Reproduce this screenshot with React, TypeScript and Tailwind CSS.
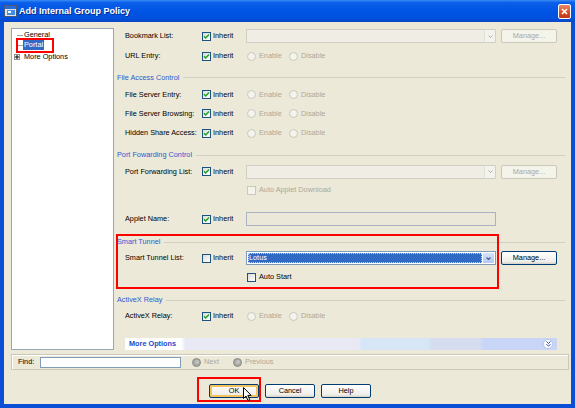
import React from 'react';

const Check = ({ checked = false }: { checked?: boolean }) => (
  <span className="w-[9px] h-[9px] shrink-0 flex items-center justify-center border border-[#1c5180] bg-[linear-gradient(135deg,#dcdcd6,#ffffff)]">
    {checked && (
      <svg width="7" height="7" viewBox="0 0 7 7">
        <path d="M1 3.2 L2.7 5 L6 1.5" fill="none" stroke="#21a121" strokeWidth="1.5" />
      </svg>
    )}
  </span>
);

const Radio = ({ label }: { label: string }) => (
  <span className="flex items-center gap-[3px] text-[#aca899]">
    <span className="w-[9px] h-[9px] rounded-full border border-[#cac8bb] bg-[#f4f3ee]" />
    {label}
  </span>
);

const Radios = () => (
  <div className="flex items-center ml-[1px]">
    <span className="w-[42px]">
      <Radio label="Enable" />
    </span>
    <Radio label="Disable" />
  </div>
);

const Combo = () => (
  <div className="w-[250px] h-[14px] border border-[#d2d0c5] bg-[#efede4] flex justify-end">
    <span className="w-[11px] h-full border-l border-[#e0ded5] bg-[#f3f2ec] flex items-center justify-center">
      <svg width="5" height="3" viewBox="0 0 5 3">
        <path d="M0.5 0.5 L2.5 2.5 L4.5 0.5" fill="none" stroke="#b0ae9f" />
      </svg>
    </span>
  </div>
);

const Manage = ({ enabled = false }: { enabled?: boolean }) => (
  <span
    className={`ml-[5px] w-[56px] h-[14px] rounded-[2px] border flex items-center justify-center ${
      enabled
        ? 'border-[#003c74] bg-[linear-gradient(180deg,#ffffff,#efeee8_80%,#d6d0c5)] text-black'
        : 'border-[#cac8bb] bg-[#f5f4ea] text-[#aca899]'
    }`}
  >
    Manage...
  </span>
);

const Row = ({
  label,
  h,
  checked = true,
  children,
}: {
  label: string;
  h: string;
  checked?: boolean;
  children?: React.ReactNode;
}) => (
  <div className={`flex items-center pl-[9px] ${h}`}>
    <span className="w-[77px]">{label}</span>
    <span className="w-[44px] flex items-center gap-[2px]">
      <Check checked={checked} />
      Inherit
    </span>
    {children}
  </div>
);

const Header = ({ title, cls }: { title: string; cls: string }) => (
  <div className={`flex items-center gap-[4px] pl-[1px] text-[#2e5bd0] ${cls}`}>
    <span>{title}</span>
    <span className="flex-1 h-px bg-[#d0cfc4]" />
  </div>
);

const Btn = ({ label, focus = false }: { label: string; focus?: boolean }) => (
  <span
    className={`w-[50px] h-[14px] rounded-[2px] border border-[#003c74] flex items-center justify-center bg-[linear-gradient(180deg,#ffffff,#efeee8_80%,#d6d0c5)] ${
      focus ? 'shadow-[inset_0_0_0_2px_#f4c15a]' : ''
    }`}
  >
    {label}
  </span>
);

const NavIcon = () => (
  <span className="w-[9px] h-[9px] rounded-full bg-[#a8a8a4] border border-[#8d8d88] flex items-center justify-center">
    <span className="w-[4px] h-[4px] rounded-full bg-[#c2c2be]" />
  </span>
);

export default function App() {
  return (
    <div className="relative w-[575px] h-[408px] bg-[#0b4fd6] flex flex-col overflow-hidden [font-family:'Liberation_Sans',Arial,sans-serif] text-[7.3px] leading-none text-black">
      {/* Title bar */}
      <div className="h-[22px] shrink-0 flex items-center px-[4px] bg-[linear-gradient(180deg,#3b8cf5_0%,#0a5ee9_12%,#0055e5_50%,#0050dc_85%,#0b46c4_100%)]">
        <svg width="14" height="14" viewBox="0 0 14 14">
          <rect x="0.5" y="1.5" width="12" height="11" fill="#dfe6ee" stroke="#4a5a70" />
          <rect x="1" y="2" width="11" height="3" fill="#2a6ad8" />
          <rect x="3" y="6" width="8" height="5" fill="#3f8ee8" />
          <rect x="4" y="7" width="3" height="2" fill="#ffffff" />
        </svg>
        <span className="ml-[1px] text-white font-bold text-[9px] [text-shadow:1px_1px_0_#0a2a8a]">Add Internal Group Policy</span>
        <span className="ml-auto w-[13px] h-[15px] rounded-[2px] border border-white bg-[linear-gradient(180deg,#e98a6c,#d9491f_60%,#c0391a)] flex items-center justify-center">
          <svg width="7" height="7" viewBox="0 0 7 7">
            <path d="M1 1 L6 6 M6 1 L1 6" stroke="#ffffff" strokeWidth="1.6" />
          </svg>
        </span>
      </div>

      {/* Body */}
      <div className="flex-1 mx-[4px] mb-[4px] bg-[#ece9d8] flex flex-col pl-[7px] pr-[2px]">
        <div className="flex gap-[2px] pt-[4px]">
          {/* Tree */}
          <div className="w-[103px] h-[322px] mt-[2px] bg-white border border-[#97a6b8] pt-[1px]">
            <div className="h-[10px] flex items-center">
              <span className="ml-[5px] mr-[1px] w-[6px] h-px bg-[#a0a0a0]" />
              <span>General</span>
            </div>
            <div className="h-[10px] flex items-center">
              <span className="ml-[5px] w-[6px] h-px bg-[#a0a0a0]" />
              <span className="px-[1px] py-[1px] bg-[#316ac5] text-white">Portal</span>
            </div>
            <div className="h-[13px] flex items-center">
              <span className="ml-[2px] mr-[4px] w-[6px] h-[6px] border border-[#8e8f8f] bg-white flex items-center justify-center">
                <svg width="4" height="4" viewBox="0 0 4 4">
                  <path d="M0 2 H4 M2 0 V4" stroke="#000" strokeWidth="1" />
                </svg>
              </span>
              <span>More Options</span>
            </div>
          </div>

          {/* Right column */}
          <div className="w-[449px] flex flex-col">
            <Row label="Bookmark List:" h="h-[20px]">
              <Combo />
              <Manage />
            </Row>
            <Row label="URL Entry:" h="h-[20px]">
              <Radios />
            </Row>

            <Header title="File Access Control" cls="mt-[4px] h-[15px]" />
            <Row label="File Server Entry:" h="h-[19px]">
              <Radios />
            </Row>
            <Row label="File Server Browsing:" h="h-[19px]">
              <Radios />
            </Row>
            <Row label="Hidden Share Access:" h="h-[20px]">
              <Radios />
            </Row>

            <Header title="Port Fowarding Control" cls="mt-[4px] h-[16px]" />
            <Row label="Port Forwarding List:" h="h-[17px]">
              <Combo />
              <Manage />
            </Row>
            <div className="h-[20px] flex items-center pl-[131px] gap-[3px] text-[#aca899]">
              <span className="w-[9px] h-[9px] border border-[#cac8bb] bg-[#f5f4ea]" />
              Auto Applet Download
            </div>
            <Row label="Applet Name:" h="mt-[9px] h-[20px]">
              <div className="w-[250px] h-[14px] border border-[#a9b3c2] bg-[#ebe8da]" />
            </Row>

            <Header title="Smart Tunnel" cls="mt-[5px] h-[16px]" />
            <Row label="Smart Tunnel List:" h="h-[16px]" checked={false}>
              <div className="w-[250px] h-[14px] border border-[#7f9db9] bg-white flex p-[1px]">
                <span className="flex-1 bg-[#316ac5] text-white flex items-center pl-[1px] outline-dotted outline-1 outline-[#c9d6ee] -outline-offset-1">
                  Lotus
                </span>
                <span className="w-[11px] ml-[1px] rounded-[1px] bg-[linear-gradient(180deg,#d7e3fd,#b4c8f6)] flex items-center justify-center">
                  <svg width="5" height="3" viewBox="0 0 5 3">
                    <path d="M0.5 0.5 L2.5 2.5 L4.5 0.5" fill="none" stroke="#4d6185" strokeWidth="1.2" />
                  </svg>
                </span>
              </div>
              <Manage enabled />
            </Row>
            <div className="mt-[1px] h-[20px] flex items-center pl-[131px] gap-[3px]">
              <Check />
              Auto Start
            </div>

            <Header title="ActiveX Relay" cls="mt-[5px] h-[16px]" />
            <Row label="ActiveX Relay:" h="h-[16px]">
              <Radios />
            </Row>

            <div className="mt-[14px] ml-[9px] w-[432px] h-[12px] flex items-center pl-[4px] pr-[4px] bg-[linear-gradient(90deg,#ffffff_0%,#ffffff_13%,#e9e9f6_14%,#e9e9f6_54%,#d6e6f7_55%,#d6e6f7_70%,#d7ddf0_71%,#d7ddf0_82%,#c8d5f6_83%,#c8d5f6_100%)]">
              <span className="font-bold text-[#2349c8]">More Options</span>
              <span className="ml-auto w-[10px] h-[10px] rounded-full bg-white border border-[#b7c6e6] flex items-center justify-center">
                <svg width="5" height="6" viewBox="0 0 5 6">
                  <path d="M0.5 0.5 L2.5 2.5 L4.5 0.5 M0.5 3.2 L2.5 5.2 L4.5 3.2" fill="none" stroke="#2349c8" strokeWidth="1" />
                </svg>
              </span>
            </div>
          </div>
        </div>

        {/* Find row */}
        <div className="mt-[4px] h-[16px] border border-[#cbc8b8] shadow-[inset_1px_1px_0_#ffffff] flex items-center pl-[6px]">
          <span className="w-[22px]">Find:</span>
          <span className="w-[141px] h-[11px] border border-[#7f9db9] bg-white" />
          <span className="ml-[11px] flex items-center gap-[3px] text-[#aca899]">
            <NavIcon />
            Next
          </span>
          <span className="ml-[14px] flex items-center gap-[3px] text-[#aca899]">
            <NavIcon />
            Previous
          </span>
        </div>

        {/* Buttons */}
        <div className="mt-[14px] h-[14px] flex justify-center gap-[6px]">
          <Btn label="OK" focus />
          <Btn label="Cancel" />
          <Btn label="Help" />
        </div>
      </div>

      {/* Annotations */}
      <div className="absolute left-[16px] top-[38px] w-[38px] h-[15px] border-2 border-[#ff0000]" />
      <div className="absolute left-[116px] top-[234px] w-[383px] h-[55px] border-2 border-[#ff0000]" />
      <div className="absolute left-[197px] top-[377px] w-[64px] h-[25px] border-2 border-[#ff0000]" />

      {/* Mouse cursor */}
      <svg className="absolute left-[243px] top-[387px]" width="10" height="15" viewBox="0 0 10 15">
        <path d="M0.5 0.5 L0.5 11.5 L3 9 L5 13.5 L6.8 12.7 L4.8 8.4 L8.2 8.4 Z" fill="#ffffff" stroke="#000000" strokeWidth="1" />
      </svg>
    </div>
  );
}
